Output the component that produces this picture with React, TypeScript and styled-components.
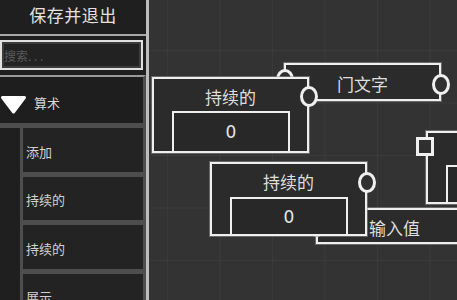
import React from "react";
import styled, { createGlobalStyle } from "styled-components";

const Global = createGlobalStyle`
  html, body { margin: 0; padding: 0; background: #333; overflow: hidden; }
  #root { width: 457px; height: 300px; }
  * { box-sizing: border-box; }
`;

const FONT = `"Noto Sans CJK SC", "Noto Sans", "DejaVu Sans", sans-serif`;

const Screen = styled.div`
  display: flex;
  width: 457px;
  height: 300px;
  font-family: ${FONT};
  overflow: hidden;
`;

const Sidebar = styled.aside`
  width: 149px;
  flex: none;
  height: 300px;
  background: #1f1f1f;
  border-right: 3px solid #bdbdbd;
  display: flex;
  flex-direction: column;
  overflow: hidden;
  position: relative;
  z-index: 2;
  & > * { flex: none; }
`;

const TitleBar = styled.div`
  height: 36px;
  display: flex;
  align-items: center;
  justify-content: center;
  padding-bottom: 6px;
  color: #e2e2e2;
  font-size: 17px;
  letter-spacing: 0.5px;
  border-bottom: 2px solid #a8a8a8;
`;

const SearchWrap = styled.div`
  padding: 4px 3px 5px 0;
`;

const SearchBox = styled.div`
  height: 30px;
  border: 2px solid #e0e0e0;
  box-shadow: inset 0 0 0 2px #3c3c3c;
  background: #222;
  display: flex;
  align-items: center;
  padding-left: 2px;
  color: #5a5a5a;
  font-size: 12px;
`;

const CategoryHeader = styled.div`
  height: 53px;
  border-top: 2px solid #9a9a9a;
  border-right: 3px solid #4e4e4e;
  border-bottom: 5px solid #4e4e4e;
  background: #1e1e1e;
  display: flex;
  align-items: center;
  padding-top: 5px;
  gap: 7px;
  color: #d8d8d8;
  font-size: 13px;
`;

const ItemList = styled.div`
  display: flex;
  flex-direction: column;
  padding-left: 20px;
`;

const Item = styled.div`
  height: 48.5px;
  flex: none;
  border-left: 3px solid #4e4e4e;
  border-right: 3px solid #4e4e4e;
  border-bottom: 5px solid #4e4e4e;
  background: #232323;
  display: flex;
  align-items: center;
  padding: 3px 0 0 3px;
  color: #d2d2d2;
  font-size: 13px;
`;

const Canvas = styled.main`
  position: relative;
  flex: 1;
  height: 300px;
  background-color: #333333;
  background-image:
    linear-gradient(to right, rgba(255, 255, 255, 0.035) 1px, transparent 1px),
    linear-gradient(to bottom, rgba(255, 255, 255, 0.035) 1px, transparent 1px);
  background-size: 52.5px 52.5px;
  background-position: 18px 50px;
  overflow: hidden;
`;

const Node = styled.div<{ $x: number; $y: number; $h: number }>`
  position: absolute;
  left: ${(p) => p.$x}px;
  top: ${(p) => p.$y}px;
  width: 157px;
  height: ${(p) => p.$h}px;
  background: #2b2b2b;
  border: 2px solid #efefef;
  box-shadow: 0 0 0 1px rgba(150, 150, 150, 0.55);
  display: flex;
  flex-direction: column;
  color: #dedede;
`;

const NodeTitle = styled.div<{ $h?: number }>`
  height: ${(p) => (p.$h ? `${p.$h}px` : "auto")};
  flex: ${(p) => (p.$h ? "none" : "1")};
  display: flex;
  align-items: center;
  justify-content: center;
  padding-top: 2px;
  font-size: 17px;
  white-space: nowrap;
`;

const ValueBox = styled.div`
  flex: 1;
  margin: 0 17px 0 18px;
  border: 2px solid #efefef;
  border-bottom: none;
  background: #282828;
  display: flex;
  align-items: center;
  justify-content: center;
  font-family: "DejaVu Sans", sans-serif;
  font-size: 17px;
  color: #e6e6e6;
`;

const Port = styled.div<{ $left: number; $top: number; $square?: boolean }>`
  position: absolute;
  width: 18px;
  height: ${(p) => (p.$square ? 19 : 21)}px;
  left: ${(p) => p.$left - 9}px;
  top: ${(p) => p.$top - (p.$square ? 9.5 : 10.5)}px;
  border: 3px solid #f0f0f0;
  border-radius: ${(p) => (p.$square ? "0" : "50%")};
  background: #303030;
`;

const Triangle = () => (
  <svg width="27" height="20" viewBox="0 0 27 20" style={{ marginLeft: 0, marginTop: 4 }}>
    <polygon
      points="2.5,2.5 24.5,2.5 13.5,17"
      fill="#ffffff"
      stroke="#ffffff"
      strokeWidth="3"
      strokeLinejoin="round"
    />
  </svg>
);

export default function App() {
  return (
    <>
      <Global />
      <Screen>
        <Sidebar>
          <TitleBar>保存并退出</TitleBar>
          <SearchWrap>
            <SearchBox>搜索. . .</SearchBox>
          </SearchWrap>
          <CategoryHeader>
            <Triangle />
            <span>算术</span>
          </CategoryHeader>
          <ItemList>
            <Item>添加</Item>
            <Item>持续的</Item>
            <Item>持续的</Item>
            <Item>展示</Item>
          </ItemList>
        </Sidebar>
        <Canvas>
          {/* 门文字 node, partly behind the first 持续的 node */}
          <Node $x={135} $y={63} $h={38}>
            <NodeTitle>门文字</NodeTitle>
            <Port $left={-1} $top={14} />
            <Port $left={155} $top={19} />
          </Node>
          <Node $x={3} $y={77} $h={76}>
            <NodeTitle $h={32}>持续的</NodeTitle>
            <ValueBox>0</ValueBox>
            <Port $left={155} $top={17} />
          </Node>
          {/* 输入值 node behind second 持续的 */}
          <Node $x={167} $y={208} $h={36}>
            <NodeTitle>输入值</NodeTitle>
            <Port $left={-1} $top={16} />
          </Node>
          <Node $x={61} $y={162} $h={74}>
            <NodeTitle $h={33}>持续的</NodeTitle>
            <ValueBox>0</ValueBox>
            <Port $left={155} $top={18} />
          </Node>
          {/* node running off the right edge; its labels lie outside the view */}
          <Node $x={277} $y={131} $h={73}>
            <NodeTitle $h={32} />
            <ValueBox />
            <Port $left={-3} $top={13} $square />
          </Node>
        </Canvas>
      </Screen>
    </>
  );
}
